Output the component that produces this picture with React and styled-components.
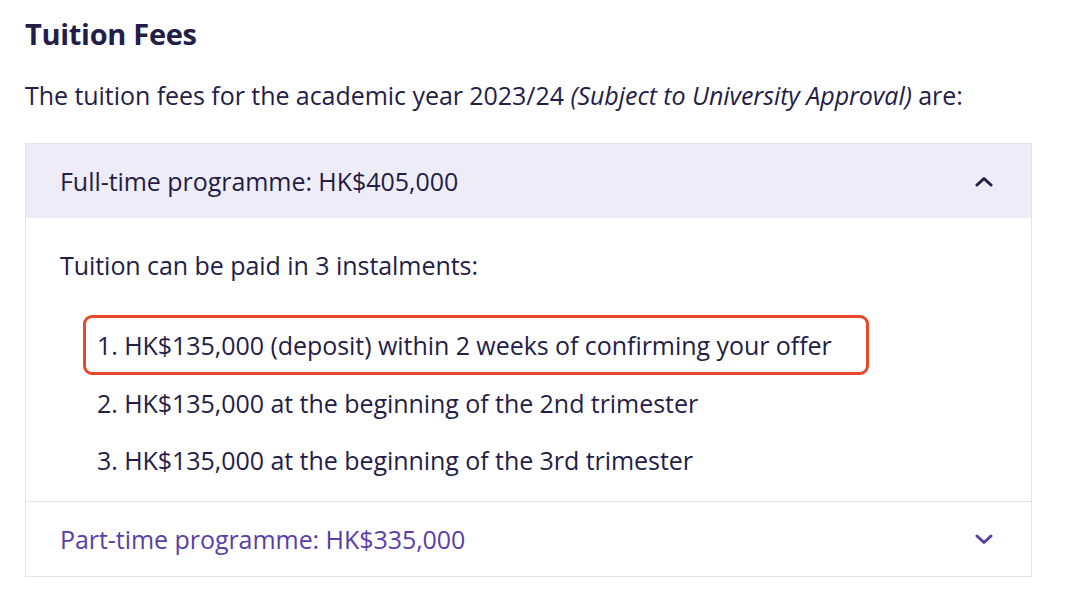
import React from "react";
import styled, { createGlobalStyle } from "styled-components";

const Global = createGlobalStyle`
  html, body { margin: 0; padding: 0; background: #ffffff; }
  body { font-family: "Open Sans", Lato, sans-serif; color: #241d47; }
`;

const Page = styled.div`
  width: 1080px;
  height: 600px;
  box-sizing: border-box;
  padding: 14px 48px 0 25px;
  overflow: hidden;
`;

const Title = styled.h2`
  margin: 0;
  font-size: 29px;
  line-height: 40px;
  font-weight: 700;
  letter-spacing: -0.3px;
`;

const Intro = styled.p`
  margin: 23px 0 0;
  font-size: 25px;
  line-height: 36px;
  letter-spacing: -0.05px;
  em { font-style: italic; }
`;

const Accordion = styled.div`
  margin-top: 30px;
  width: 1007px;
  border: 1.5px solid #e3e1ea;
  box-sizing: border-box;
`;

const Section = styled.section`
  & + & { border-top: 1.5px solid #e3e1ea; }
`;

const Header = styled.div`
  height: 74px;
  display: flex;
  align-items: center;
  justify-content: space-between;
  padding: 0 38px 0 34px;
  background: ${(p) => (p.$open ? "#eeecf6" : "#ffffff")};
  color: ${(p) => (p.$open ? "#241d47" : "#5a3ea9")};
  font-size: 25px;
  letter-spacing: -0.05px;
`;

const Body = styled.div`
  padding: 29px 34px 14px;
`;

const Lead = styled.p`
  margin: 0;
  font-size: 25px;
  line-height: 36px;
  letter-spacing: -0.05px;
`;

const List = styled.ol`
  list-style: none;
  margin: 35px 0 0;
  padding: 0 0 0 26px;
`;

const Item = styled.li`
  width: fit-content;
  padding: 9px 34px 9px 11px;
  font-size: 25px;
  line-height: 36px;
  letter-spacing: -0.05px;
  border-radius: 6px;
  outline: ${(p) => (p.$highlight ? "3px solid #e8472b" : "none")};
  & + & { margin-top: 3.5px; }
`;

const Chevron = ({ up, color }) => (
  <svg width="18" height="11" viewBox="0 0 18 11" fill="none">
    <path
      d={up ? "M2 9 L9 2.5 L16 9" : "M2 2 L9 8.5 L16 2"}
      stroke={color}
      strokeWidth="3"
      strokeLinecap="round"
      strokeLinejoin="round"
    />
  </svg>
);

export default function App() {
  return (
    <>
      <Global />
      <Page>
        <Title>Tuition Fees</Title>
        <Intro>
          The tuition fees for the academic year 2023/24{" "}
          <em>(Subject to University Approval)</em> are:
        </Intro>
        <Accordion>
          <Section>
            <Header $open>
              <span>Full-time programme: HK$405,000</span>
              <Chevron up color="#241d47" />
            </Header>
            <Body>
              <Lead>Tuition can be paid in 3 instalments:</Lead>
              <List>
                <Item $highlight>1. HK$135,000 (deposit) within 2 weeks of confirming your offer</Item>
                <Item>2. HK$135,000 at the beginning of the 2nd trimester</Item>
                <Item>3. HK$135,000 at the beginning of the 3rd trimester</Item>
              </List>
            </Body>
          </Section>
          <Section>
            <Header>
              <span>Part-time programme: HK$335,000</span>
              <Chevron color="#5a3ea9" />
            </Header>
          </Section>
        </Accordion>
      </Page>
    </>
  );
}
